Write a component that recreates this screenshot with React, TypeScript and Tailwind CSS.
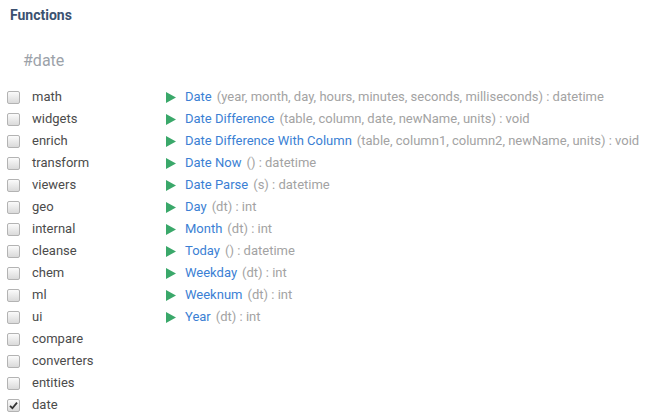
const packages = [
  'math', 'widgets', 'enrich', 'transform', 'viewers', 'geo', 'internal', 'cleanse',
  'chem', 'ml', 'ui', 'compare', 'converters', 'entities', 'date',
];

const functions = [
  { name: 'Date', sig: '(year, month, day, hours, minutes, seconds, milliseconds) : datetime' },
  { name: 'Date Difference', sig: '(table, column, date, newName, units) : void' },
  { name: 'Date Difference With Column', sig: '(table, column1, column2, newName, units) : void' },
  { name: 'Date Now', sig: '() : datetime' },
  { name: 'Date Parse', sig: '(s) : datetime' },
  { name: 'Day', sig: '(dt) : int' },
  { name: 'Month', sig: '(dt) : int' },
  { name: 'Today', sig: '() : datetime' },
  { name: 'Weekday', sig: '(dt) : int' },
  { name: 'Weeknum', sig: '(dt) : int' },
  { name: 'Year', sig: '(dt) : int' },
];

function Checkbox({ checked }: { checked: boolean }) {
  return (
    <span className="w-[13px] h-[13px] rounded-[2px] border border-[#b3b3b3] bg-gradient-to-b from-[#fbfbfb] to-[#dadada] flex items-center justify-center">
      {checked && (
        <svg width="9" height="9" viewBox="0 0 9 9">
          <path d="M1 4.8 L3.4 7.2 L8 1.6" fill="none" stroke="#333" strokeWidth="1.8" />
        </svg>
      )}
    </span>
  );
}

export default function App() {
  return (
    <div className="w-[651px] h-[417px] bg-white overflow-hidden font-['Roboto',sans-serif]">
      <div className="pl-[10px] pt-[6px] h-[18px] box-content text-[14px] leading-[18px] font-bold text-[#3b5170]">
        Functions
      </div>
      <div className="pl-[23px] mt-[25px] h-[24px] text-[16px] leading-[24px] text-[#9ca2a9]">
        #date
      </div>
      <div className="flex mt-[13px]">
        <div className="w-[166px] flex flex-col">
          {packages.map((p) => (
            <div key={p} className="h-[22px] flex items-center pl-[7px]">
              <Checkbox checked={p === 'date'} />
              <span className="ml-[12px] text-[13px] text-[#4b4b4b]">{p}</span>
            </div>
          ))}
        </div>
        <div className="flex flex-col">
          {functions.map((f) => (
            <div key={f.name} className="h-[22px] flex items-center text-[13px] whitespace-nowrap">
              <svg width="10" height="11" viewBox="0 0 10 11" className="mr-[9px]">
                <path d="M0 0 L10 5.5 L0 11 Z" fill="#3aa86a" />
              </svg>
              <span className="text-[#3b7fd4]">{f.name}</span>
              <span className="ml-[5px] text-[#a3a3a3]">{f.sig}</span>
            </div>
          ))}
        </div>
      </div>
    </div>
  );
}
